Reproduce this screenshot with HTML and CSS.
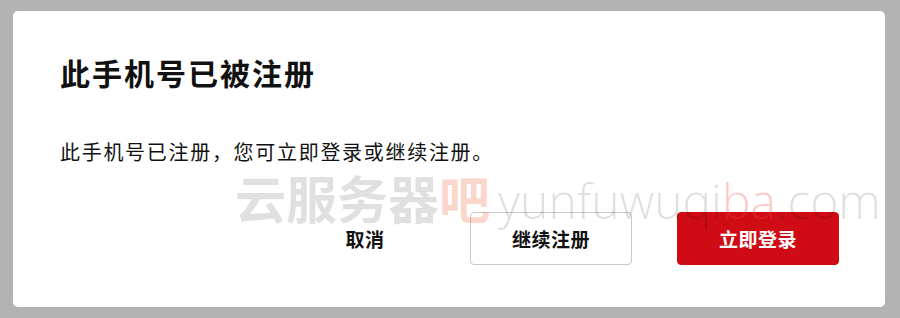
FILE: index.html
```html
<!DOCTYPE html>
<html lang="zh-CN">
<head>
<meta charset="utf-8">
<title>此手机号已被注册</title>
<link rel="stylesheet" href="styles.css">
</head>
<body>
<div class="overlay">
  <div class="dialog">
    <h1 class="title">此手机号已被注册</h1>
    <p class="message">此手机号已注册，您可立即登录或继续注册。</p>
    <div class="actions">
      <button class="btn btn-text">取消</button>
      <button class="btn btn-outline">继续注册</button>
      <button class="btn btn-primary">立即登录</button>
    </div>
    <div class="watermark" aria-hidden="true">
      <span class="wm-cn">云服务器</span><span class="wm-cn wm-accent">吧</span>
      <span class="wm-en">yunfuwuqi<span class="wm-en-accent">ba</span>.com</span>
    </div>
  </div>
</div>
</body>
</html>
```

FILE: styles.css
```css
* { box-sizing: border-box; }

html, body {
  margin: 0;
  padding: 0;
  background: #b3b3b3;
}

body {
  font-family: "Noto Sans CJK SC", "Noto Sans", sans-serif;
  color: #111;
}

.overlay {
  padding: 11px 15px 11px 13px;
  height: 318px;
}

.dialog {
  position: relative;
  background: #fff;
  border-radius: 5px;
  height: 296px;
  padding: 46px 46px 42px 47px;
  display: flex;
  flex-direction: column;
  overflow: hidden;
}

.title {
  margin: 0;
  font-size: 30px;
  line-height: 30px;
  font-weight: 700;
  letter-spacing: 2px;
  color: #111;
}

.message {
  margin: 55px 0 0;
  font-size: 20px;
  line-height: 20px;
  font-weight: 400;
  letter-spacing: 1.7px;
  color: #111;
}

.actions {
  margin-top: auto;
  display: flex;
  justify-content: flex-end;
  gap: 45px;
}

.btn {
  height: 53px;
  border-radius: 4px;
  font-family: inherit;
  font-size: 19px;
  font-weight: 700;
  letter-spacing: 0.5px;
  padding: 0;
  display: flex;
  align-items: center;
  justify-content: center;
  border: 1px solid transparent;
  background: transparent;
  color: #111;
}

.btn-text {
  width: 120px;
}

.btn-outline {
  width: 162px;
  border-color: #c9c9c9;
  background: #fff;
}

.btn-primary {
  width: 162px;
  background: #cf0c14;
  border-color: #cf0c14;
  color: #fff;
}

.watermark {
  position: absolute;
  left: 222px;
  top: 156px;
  display: flex;
  align-items: baseline;
  gap: 8px;
  pointer-events: none;
  white-space: nowrap;
  z-index: 2;
}

.wm-cn {
  font-size: 51px;
  font-weight: 700;
  line-height: 60px;
  color: rgba(0, 0, 0, 0.12);
  margin-right: -8px;
}

.wm-accent {
  color: rgba(240, 110, 70, 0.28);
  margin-right: 0;
}

.wm-en {
  font-family: "Open Sans", "Liberation Sans", sans-serif;
  font-size: 48px;
  font-weight: 300;
  line-height: 60px;
  color: rgba(0, 0, 0, 0.14);
}

.wm-en-accent {
  color: rgba(235, 70, 60, 0.28);
}
```
